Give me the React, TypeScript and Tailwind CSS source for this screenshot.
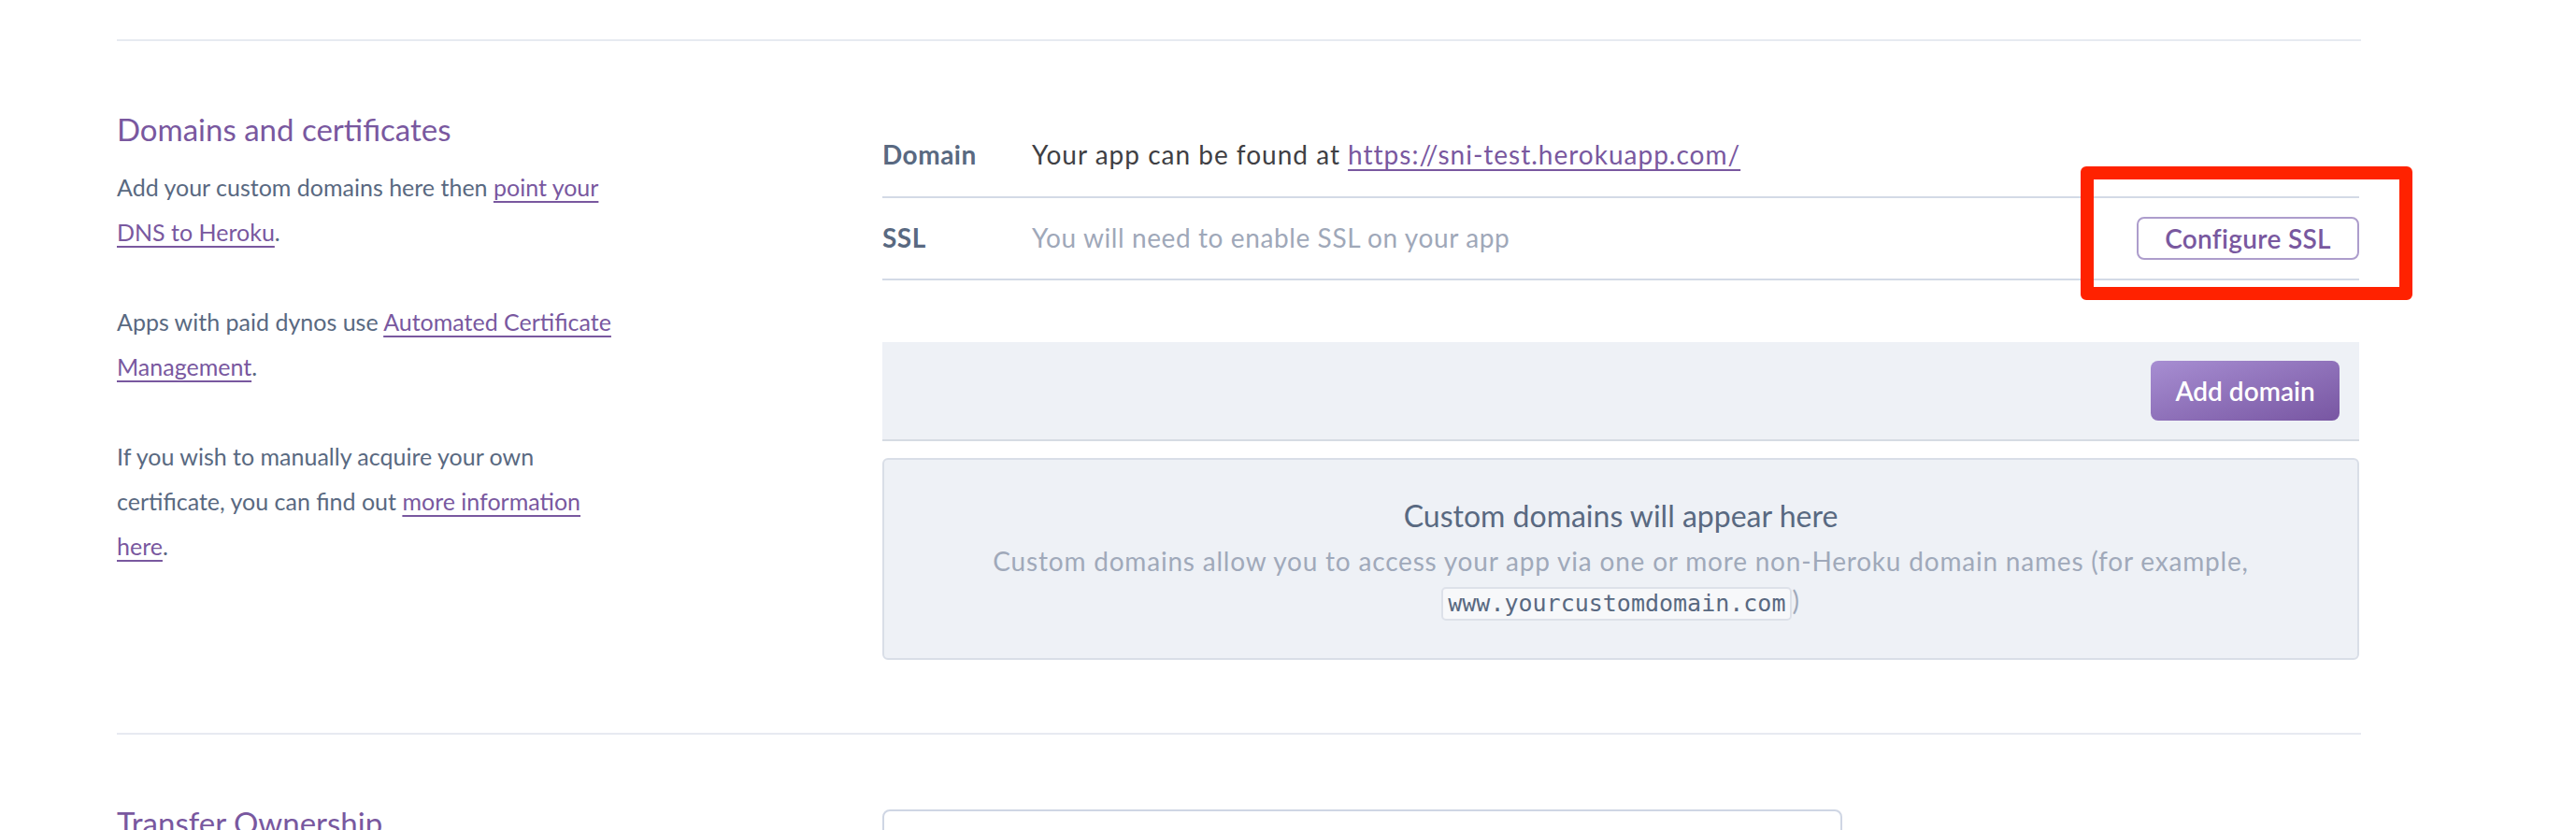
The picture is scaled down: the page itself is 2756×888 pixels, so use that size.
import React from "react";

const linkCls = "text-[#79589f] underline decoration-[2px] underline-offset-[5px]";

export default function App() {
  return (
    <div className="relative w-[2756px] min-h-[888px] bg-white font-['Lato',sans-serif] pl-[125px] pt-[42px] overflow-hidden">
      <div className="w-[2401px]">
        {/* Domains section */}
        <section className="flex border-t-2 border-[#e7eaf1] pt-[80px] pb-[78px]">
          <div className="w-[819px] shrink-0">
            <h2 className="text-[33px] leading-[36px] font-normal text-[#79589f] -mt-[4px]">Domains and certificates</h2>
            <div className="mt-[20px] text-[25px] leading-[48px] text-[#596981]">
              <p>
                Add your custom domains here then <a className={linkCls}>point your</a>
                <br />
                <a className={linkCls}>DNS to Heroku</a>.
              </p>
              <p className="mt-[48px]">
                Apps with paid dynos use <a className={linkCls}>Automated Certificate</a>
                <br />
                <a className={linkCls}>Management</a>.
              </p>
              <p className="mt-[48px]">
                If you wish to manually acquire your own
                <br />
                certificate, you can find out <a className={linkCls}>more information</a>
                <br />
                <a className={linkCls}>here</a>.
              </p>
            </div>
          </div>

          <div className="w-[1580px] shrink-0">
            {/* table */}
            <div className="flex h-[88px] items-center border-b-2 border-[#d3dae6] pb-[4px] text-[28px]">
              <div className="w-[160px] font-bold tracking-[0.5px] text-[#596981]">Domain</div>
              <div className="tracking-[1px] text-[#3f3f44]">
                Your app can be found at <a className={linkCls}>https://sni-test.herokuapp.com/</a>
              </div>
            </div>
            <div className="flex h-[88px] items-center border-b-2 border-[#d3dae6] text-[28px]">
              <div className="w-[160px] -mt-[2px] font-bold tracking-[0.5px] text-[#596981]">SSL</div>
              <div className="flex-1 -mt-[2px] tracking-[0.6px] text-[#9fa8b9]">You will need to enable SSL on your app</div>
              <button className="h-[46px] w-[238px] rounded-[8px] border-2 border-[#ad9dcc] bg-white text-[28px] font-semibold tracking-[0.3px] text-[#79589f]">
                Configure SSL
              </button>
            </div>

            {/* add domain bar */}
            <div className="mt-[66px] flex justify-end border-b-2 border-[#d6dbe3] bg-[#eef1f6] px-[21px] py-[20px]">
              <button className="h-[64px] w-[202px] rounded-[8px] bg-linear-to-br from-[#a78ed2] to-[#7856a2] text-[28px] font-semibold text-white">
                Add domain
              </button>
            </div>

            {/* empty state */}
            <div className="mt-[18px] rounded-[6px] border-2 border-[#d9dee7] bg-[#eef1f6] px-[30px] pt-[40px] pb-[40px] text-center">
              <div className="text-[32px] leading-[40px] text-[#596981]">Custom domains will appear here</div>
              <div className="mt-[7px] text-[28px] leading-[42px] tracking-[0.8px] text-[#a0a9ba]">
                Custom domains allow you to access your app via one or more non-Heroku domain names (for example,
                <br />
                <code className="inline-block rounded-[5px] border-2 border-[#dde1e9] bg-[#f7f8fa] px-[5px] align-middle font-['DejaVu_Sans_Mono',monospace] text-[25px] leading-[32px] tracking-normal text-[#596981]">
                  www.yourcustomdomain.com
                </code>
                )
              </div>
            </div>
          </div>
        </section>

        {/* Transfer ownership section */}
        <section className="flex border-t-2 border-[#e7eaf1] pt-[80px] pb-[80px]">
          <div className="w-[819px] shrink-0">
            <h2 className="text-[33px] leading-[36px] font-normal text-[#79589f] -mt-[4px]">Transfer Ownership</h2>
          </div>
          <div className="w-[1580px] shrink-0">
            <div className="h-[64px] w-[1027px] rounded-[8px] border-2 border-[#cfd6e4] bg-white" />
          </div>
        </section>
      </div>

      {/* annotation */}
      <div className="absolute left-[2226px] top-[178px] h-[143px] w-[355px] rounded-[6px] border-[14px] border-[#ff2200]" />
    </div>
  );
}
